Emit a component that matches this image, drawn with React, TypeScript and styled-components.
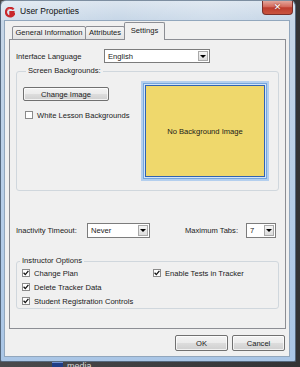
import React from 'react';
import styled, { createGlobalStyle } from 'styled-components';

const GlobalStyle = createGlobalStyle`
  html, body {
    margin: 0;
    padding: 0;
  }
  body {
    width: 300px;
    height: 367px;
    overflow: hidden;
    background: #3b3b3d;
    font-family: 'Liberation Sans', Arial, sans-serif;
  }
`;

const FONT = `'Liberation Sans', Arial, sans-serif`;

const LogoIcon = () => (
  <svg width="10" height="11" viewBox="0 0 10 11">
    <path d="M8.6 2.4 A4.3 4.3 0 1 0 9 7.2 L5.4 7.2 L5.4 5.2 L9.6 5.2" fill="none" stroke="#c9282d" strokeWidth="2.2" />
    <path d="M2.2 3 L4.6 1.6" stroke="#f08a8a" strokeWidth="0.8" />
  </svg>
);

const CheckMark = () => (
  <svg width="6" height="6" viewBox="0 0 6 6">
    <path d="M0.6 2.8 L2.3 4.6 L5.4 0.9" fill="none" stroke="#111" strokeWidth="1.3" />
  </svg>
);

const Desktop = styled.div`
  width: 300px;
  height: 367px;
  overflow: hidden;
  background: linear-gradient(90deg, #4a4a4c, #333335);
  display: flex;
  flex-direction: column;
`;

const Window = styled.div`
  width: 296px;
  height: 362px;
  flex-shrink: 0;
  box-sizing: border-box;
  border: 1px solid #55687e;
  border-top-color: #7d8ea0;
  border-radius: 6px 6px 2px 2px;
  background: linear-gradient(180deg, #dbe5ef 0px, #c6d6e7 20px, #b5cde8 60%, #aac6e6 100%);
  display: flex;
  flex-direction: column;
`;

const TitleBar = styled.div`
  height: 19px;
  display: flex;
  align-items: flex-start;
  padding-left: 4px;
  background: linear-gradient(90deg, rgba(255, 255, 255, 0.25), rgba(255, 255, 255, 0) 40%, rgba(255, 255, 255, 0.15) 70%, rgba(255, 255, 255, 0));
`;

const Logo = styled.div`
  margin-top: 6px;
  width: 10px;
  height: 11px;
  display: flex;
`;

const Title = styled.div`
  margin-left: 5px;
  font-family: ${FONT};
  font-size: 8.5px;
  line-height: 20px;
  color: #111;
`;

const CloseButton = styled.div`
  margin-left: auto;
  margin-right: 2px;
  width: 31px;
  height: 14px;
  box-sizing: border-box;
  border: 1px solid #7a302a;
  border-top: none;
  border-radius: 0 0 4px 4px;
  background: linear-gradient(180deg, #e3a79c 0%, #d4685a 45%, #bd3d2e 52%, #c9543f 100%);
  color: #fff;
  font-family: 'DejaVu Sans', sans-serif;
  font-weight: bold;
  font-size: 9px;
  line-height: 13px;
  text-align: center;
  text-shadow: 0 0 2px #6a1a12;
`;

const Client = styled.div`
  margin: 0 5px 4px 3px;
  width: 286px;
  height: 337px;
  box-sizing: border-box;
  border: 1px solid #92a7bd;
  background: #f0f0f0;
  padding: 2px 4px 0 4px;
  display: flex;
  flex-direction: column;
  font-family: ${FONT};
  font-size: 7.6px;
  color: #1a1a1a;
`;

const TabStrip = styled.div`
  height: 17px;
  display: flex;
  align-items: flex-end;
  padding-left: 3px;
  position: relative;
  z-index: 1;
  margin-bottom: -1px;
`;

const Tab = styled.div<{ $w: number; $active?: boolean }>`
  width: ${({ $w }) => $w}px;
  height: ${({ $active }) => ($active ? 18 : 14)}px;
  margin-left: -1px;
  box-sizing: border-box;
  border: 1px solid #8c8e94;
  border-bottom: ${({ $active }) => ($active ? 'none' : '1px solid #8c8e94')};
  border-radius: 2px 2px 0 0;
  background: ${({ $active }) => ($active ? '#f0f0f0' : 'linear-gradient(180deg, #f4f4f4, #e3e3e3)')};
  line-height: ${({ $active }) => ($active ? 16 : 12)}px;
  text-align: center;
  white-space: nowrap;
  &:first-child {
    margin-left: 0;
  }
`;

const Panel = styled.div`
  width: 277px;
  height: 290px;
  box-sizing: border-box;
  border: 1px solid #8c8e94;
  background: #f0f0f0;
  padding: 9px 6px 0 6px;
  display: flex;
  flex-direction: column;
`;

const FieldRow = styled.div<{ $h: number; $mt?: number }>`
  height: ${({ $h }) => $h}px;
  margin-top: ${({ $mt }) => $mt || 0}px;
  display: flex;
  align-items: center;
`;

const Label = styled.div<{ $w?: number }>`
  width: ${({ $w }) => ($w ? `${$w}px` : 'auto')};
  white-space: nowrap;
`;

const Dropdown = styled.div<{ $w: number }>`
  width: ${({ $w }) => $w}px;
  height: 100%;
  box-sizing: border-box;
  border: 1px solid #7c7c7c;
  background: #fff;
  padding: 1px;
  display: flex;
  align-items: stretch;
`;

const DropValue = styled.div`
  flex: 1;
  padding-left: 2px;
  display: flex;
  align-items: center;
`;

const DropArrow = styled.div`
  width: 10px;
  box-sizing: border-box;
  border: 1px solid #a9a9a9;
  background: linear-gradient(180deg, #f5f5f5, #dcdcdc);
  display: flex;
  align-items: center;
  justify-content: center;
  &::after {
    content: '';
    border-left: 3px solid transparent;
    border-right: 3px solid transparent;
    border-top: 3px solid #000;
  }
`;

const Group = styled.fieldset<{ $mt: number; $pad: string }>`
  margin: ${({ $mt }) => $mt}px 0 0 0;
  padding: ${({ $pad }) => $pad};
  min-width: 0;
  border: 1px solid #d0d7dd;
  border-radius: 3px;
`;

const Legend = styled.legend`
  margin-left: 3px;
  padding: 0 2px;
  line-height: 10px;
  font-size: 7.6px;
  color: #1a1a1a;
`;

const BgLayout = styled.div`
  display: flex;
  align-items: flex-start;
`;

const BgControls = styled.div`
  flex: 1;
  padding-top: 6px;
  display: flex;
  flex-direction: column;
  align-items: flex-start;
`;

const Button = styled.div<{ $w: number; $h: number }>`
  width: ${({ $w }) => $w}px;
  height: ${({ $h }) => $h}px;
  box-sizing: border-box;
  border: 1px solid #707070;
  border-radius: 2px;
  background: linear-gradient(180deg, #f3f3f3 0%, #ebebeb 50%, #dddddd 51%, #cfcfcf 100%);
  box-shadow: inset 0 0 0 1px rgba(255, 255, 255, 0.7);
  display: flex;
  align-items: center;
  justify-content: center;
`;

const CheckRow = styled.div<{ $mt?: number; $ml?: number }>`
  height: 14px;
  margin-top: ${({ $mt }) => $mt || 0}px;
  margin-left: ${({ $ml }) => $ml || 0}px;
  display: flex;
  align-items: center;
  gap: 4px;
  white-space: nowrap;
`;

const CheckBox = styled.div`
  width: 8px;
  height: 8px;
  box-sizing: border-box;
  border: 1px solid #8a8a8a;
  background: #fff;
  display: flex;
  align-items: center;
  justify-content: center;
`;

const ImageFrame = styled.div`
  margin: 4px;
  width: 120px;
  height: 92px;
  box-sizing: border-box;
  border: 1px solid #2f62b3;
  background: #efd86c;
  box-shadow: 0 0 0 1px #d3e4f6, 0 0 0 2px #74a6de, 0 0 0 4px #b4cfee;
  display: flex;
  align-items: center;
  justify-content: center;
  white-space: nowrap;
`;

const Spacer = styled.div`
  flex: 1;
`;

const TabsLabel = styled.div`
  margin-right: 8px;
  white-space: nowrap;
`;

const OptionsGrid = styled.div`
  display: grid;
  grid-template-columns: 131px 1fr;
  padding-left: 5px;
`;

const ButtonRow = styled.div`
  margin-top: 6px;
  padding-right: 0;
  display: flex;
  justify-content: flex-end;
  gap: 4px;
`;

const TaskStrip = styled.div`
  height: 5px;
  overflow: hidden;
  padding-left: 52px;
  display: flex;
  align-items: flex-start;
  gap: 4px;
`;

const TaskIcon = styled.div`
  width: 11px;
  height: 5px;
  background: #1f3d86;
  border-top: 1px solid #6f8fd0;
  box-sizing: border-box;
`;

const TaskText = styled.div`
  font-family: ${FONT};
  font-size: 9px;
  line-height: 8px;
  color: #d8d8d8;
`;

const Check = ({ label, mt, ml, checked }: { label: string; mt?: number; ml?: number; checked?: boolean }) => (
  <CheckRow $mt={mt} $ml={ml}>
    <CheckBox>{checked && <CheckMark />}</CheckBox>
    <span>{label}</span>
  </CheckRow>
);

const Select = ({ value, w }: { value: string; w: number }) => (
  <Dropdown $w={w}>
    <DropValue>{value}</DropValue>
    <DropArrow />
  </Dropdown>
);

const App = () => {
  return (
    <>
      <GlobalStyle />
      <Desktop>
        <Window>
          <TitleBar>
            <Logo>
              <LogoIcon />
            </Logo>
            <Title>User Properties</Title>
            <CloseButton>✕</CloseButton>
          </TitleBar>
          <Client>
            <TabStrip>
              <Tab $w={74}>General Information</Tab>
              <Tab $w={40}>Attributes</Tab>
              <Tab $w={41} $active>
                Settings
              </Tab>
            </TabStrip>
            <Panel>
              <FieldRow $h={14}>
                <Label $w={88}>Interface Language</Label>
                <Select value="English" w={106} />
              </FieldRow>

              <Group $mt={3} $pad="5px 9px 9px 6px">
                <Legend>Screen Backgrounds:</Legend>
                <BgLayout>
                  <BgControls>
                    <Button $w={86} $h={14}>Change Image</Button>
                    <Check label="White Lesson Backgrounds" mt={7} ml={2} />
                  </BgControls>
                  <ImageFrame>No Background Image</ImageFrame>
                </BgLayout>
              </Group>

              <FieldRow $h={15} $mt={32}>
                <Label $w={71}>Inactivity Timeout:</Label>
                <Select value="Never" w={63} />
                <Spacer />
                <TabsLabel>Maximum Tabs:</TabsLabel>
                <Select value="7" w={30} />
                <div style={{ width: 3 }} />
              </FieldRow>

              <Group $mt={18} $pad="0 0 0 0">
                <Legend>Instructor Options</Legend>
                <OptionsGrid>
                  <Check label="Change Plan" checked />
                  <Check label="Enable Tests in Tracker" checked />
                  <Check label="Delete Tracker Data" checked />
                  <div />
                  <Check label="Student Registration Controls" checked />
                </OptionsGrid>
              </Group>
            </Panel>
            <ButtonRow>
              <Button $w={53} $h={16}>OK</Button>
              <Button $w={53} $h={16}>Cancel</Button>
            </ButtonRow>
          </Client>
        </Window>
        <TaskStrip>
          <TaskIcon />
          <TaskText>media</TaskText>
        </TaskStrip>
      </Desktop>
    </>
  );
};

export default App;
